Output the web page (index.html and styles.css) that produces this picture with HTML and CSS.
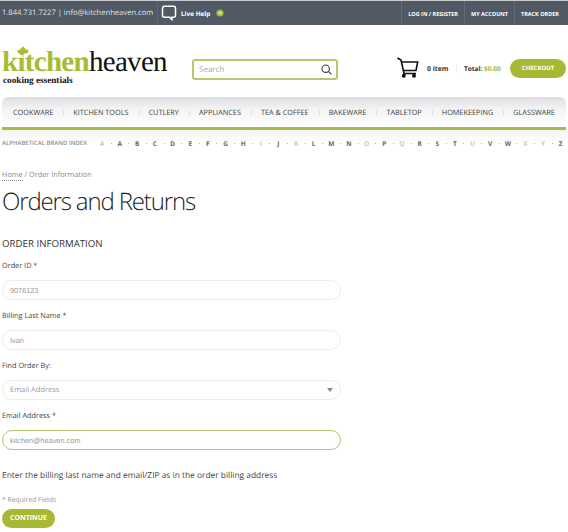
FILE: index.html
```html
<!DOCTYPE html>
<html lang="en">
<head>
<meta charset="utf-8">
<title>Orders and Returns</title>
<link rel="stylesheet" href="styles.css">
</head>
<body>
<div class="topbar">
  <div class="top-left">
    <span class="contact">1.844.731.7227 | info@kitchenheaven.com</span>
    <span class="help">
      <svg class="bubble" width="16" height="16" viewBox="0 0 16 16"><path d="M3.5 1.2h9a2 2 0 0 1 2 2v7a2 2 0 0 1-2 2h-1.6v2.3l-2.4-2.3H3.5a2 2 0 0 1-2-2v-7a2 2 0 0 1 2-2z" fill="none" stroke="#fff" stroke-width="1.5"/></svg>
      <b>Live Help</b>
      <svg class="go" width="8" height="8" viewBox="0 0 8 8"><circle cx="4" cy="4" r="3.6" fill="#a9bb34"/><path d="M2 4h3.6M4.2 2.6 5.6 4 4.2 5.4" stroke="#fff" stroke-width=".8" fill="none"/></svg>
    </span>
  </div>
  <div class="top-links"><a>LOG IN / REGISTER</a><a>MY ACCOUNT</a><a>TRACK ORDER</a></div>
</div>

<header class="header">
  <div class="logo">
    <svg class="leaf" width="12" height="11" viewBox="0 0 12 11"><path d="M6 0l1.3 2.2 1.2-.5-.4 2.4 1.5-1 .5 1L12 4.400 10.800 6.300 11.300 7 8 7.600 6.400 8.200V11H5.600V8.200L4 7.600.7 7l.5-.7L0 4.400l1.900-.3.500-1 1.500 1-.4-2.400 1.200.5z" fill="#a9bb34"/></svg>
    <div class="wordmark"><span class="kitchen">kitchen</span><span class="heaven">heaven</span></div>
    <div class="tagline">cooking essentials</div>
  </div>
  <div class="search">
    <span>Search</span>
    <svg width="11" height="11" viewBox="0 0 11 11"><circle cx="4.700" cy="4.700" r="3.700" fill="none" stroke="#3a3a3a" stroke-width="1.100"/><path d="M7.400 7.400 10.400 10.400" stroke="#3a3a3a" stroke-width="1.200"/></svg>
  </div>
  <div class="cart">
    <svg class="cart-icon" width="22" height="22" viewBox="0 0 22 22"><path d="M.5 1 4 3l3 13.500h12M4.800 5h15.900l-1.700 8.500H6.700" fill="none" stroke="#111" stroke-width="1.600"/><circle cx="6.800" cy="18.800" r="2" fill="#111"/><circle cx="17" cy="18.800" r="2" fill="#111"/></svg>
    <b class="items">0 item</b>
    <span class="total">Total: <em>$0.00</em></span>
    <a class="checkout">CHECKOUT</a>
  </div>
</header>

<nav class="nav">
  <a>COOKWARE</a><a>KITCHEN TOOLS</a><a>CUTLERY</a><a>APPLIANCES</a><a>TEA &amp; COFFEE</a><a>BAKEWARE</a><a>TABLETOP</a><a>HOMEKEEPING</a><a>GLASSWARE</a>
</nav>

<div class="brands">
  <span class="brands-title">ALPHABETICAL BRAND INDEX</span>
  <ol class="letters">
    <li class="off">#</li><li>A</li><li>B</li><li>C</li><li>D</li><li>E</li><li>F</li><li>G</li><li>H</li><li class="off">I</li><li>J</li><li class="off">K</li><li>L</li><li>M</li><li>N</li><li class="off">O</li><li>P</li><li class="off">Q</li><li>R</li><li>S</li><li>T</li><li class="off">U</li><li>V</li><li>W</li><li class="off">X</li><li class="off">Y</li><li>Z</li>
  </ol>
</div>

<main class="main">
  <div class="crumbs"><a>Home</a> / Order Information</div>
  <h1>Orders and Returns</h1>
  <h2>ORDER INFORMATION</h2>
  <form class="form">
    <label>Order ID *</label>
    <div class="field"><span class="num">9076123</span></div>
    <label>Billing Last Name *</label>
    <div class="field"><span class="num">Ivan</span></div>
    <label>Find Order By:</label>
    <div class="field select"><span>Email Address</span><i class="arrow"></i></div>
    <label>Email Address *</label>
    <div class="field active"><span class="num">kitchen@heaven.com</span></div>
  </form>
  <p class="note">Enter the billing last name and email/ZIP as in the order billing address</p>
  <p class="req">* Required Fields</p>
  <a class="continue">CONTINUE</a>
</main>
</body>
</html>
```

FILE: styles.css
```css
* { box-sizing: border-box; }
html, body { margin: 0; padding: 0; }
body {
  width: 568px;
  height: 532px;
  overflow: hidden;
  background: #fff;
  font-family: "Open Sans", sans-serif;
  color: #333;
  text-rendering: geometricPrecision;
}
.topbar {
  height: 25px;
  border-top: 1px solid #c9cbcd;
  background: #515a64;
  display: flex;
  justify-content: space-between;
  color: #fff;
}
.top-left { display: flex; align-items: center; padding-left: 2px; }
.contact { font-size: 7.600px; color: #dfe2e5; width: 155px; white-space: nowrap; }
.help {
  display: flex;
  align-items: center;
  height: 24px;
  padding-left: 3px;
  border-left: 1px solid #5e6770;
  font-size: 6.400px;
}
.bubble { margin-right: 4px; }
.go { margin-left: 6px; }
.top-links { display: flex; padding-right: 3px; }
.top-links a {
  display: flex;
  align-items: center;
  padding: 2px 6px 0 6px;
  border-left: 1px solid #636c75;
  font-size: 5.500px;
  font-weight: 700;
  white-space: nowrap;
}
.header {
  height: 72px;
  position: relative;
  display: flex;
  align-items: flex-start;
  padding-left: 2px;
}
.logo { width: 190px; height: 60px; padding-top: 21px; position: relative; }
.leaf { position: absolute; left: 15px; top: 21px; }
.wordmark { font-family: "Liberation Serif", serif; font-size: 29px; line-height: 28px; margin-top: 2px; letter-spacing: -.7px; white-space: nowrap; }
.kitchen { color: #a9bb34; font-weight: 700; }
.heaven { color: #111; }
.tagline { font-family: "Liberation Serif", serif; font-weight: 700; font-size: 9.200px; line-height: 9px; color: #111; margin-top: 0; padding-left: 1px; }
.search {
  width: 146px;
  height: 21px;
  margin-top: 34px;
  border: 2px solid #b9c76e;
  border-radius: 3px;
  display: flex;
  align-items: center;
  justify-content: space-between;
  padding: 0 4px 0 5px;
  font-size: 8px;
  color: #a4a8ac;
}
.cart { margin-left: 59px; margin-top: 31px; display: flex; align-items: center; height: 24px; }
.cart-icon { margin-right: 8px; }
.items { font-size: 6.800px; width: 29px; color: #333; }
.total { font-size: 6.500px; font-weight: 700; padding-left: 7px; border-left: 1px solid #eee; width: 54px; color: #333; }
.total em { font-style: normal; color: #a9bb34; }
.checkout {
  width: 56px;
  height: 19px;
  border-radius: 10px;
  background: #a9b833;
  color: #fff;
  font-size: 6px;
  font-weight: 700;
  display: flex;
  align-items: center;
  justify-content: center;
}
.nav {
  margin: 0 2px;
  height: 33px;
  border-bottom: 3px solid #a9bb44;
  border-radius: 6px 6px 0 0;
  background: linear-gradient(#dcdddf, #f4f4f5 40%, #fff);
  display: flex;
  align-items: center;
  padding: 0 11px 0 11px;
  justify-content: space-between;
}
.nav a { position: relative; font-size: 7.300px; color: #3c3c3c; padding: 2px 0 0 0; white-space: nowrap; flex: 0 0 auto; }
.nav a + a::before {
  content: "";
  position: absolute;
  left: -10px;
  top: 4px;
  width: 1px;
  height: 6px;
  background: #e2e2e2;
}
.brands {
  display: flex;
  align-items: center;
  justify-content: space-between;
  height: 24px;
  padding: 2px 4px 0 2px;
  background: linear-gradient(#f2f2f2, #fff 50%);
}
.brands-title { font-size: 6px; font-weight: 600; color: #8a8e92; white-space: nowrap; }
.letters { list-style: none; display: flex; justify-content: space-between; width: 465px; margin: 0; padding: 0; font-size: 6.500px; font-weight: 700; color: #666; }
.letters li { position: relative; width: 6px; text-align: center; }
.letters li + li::before {
  content: "";
  position: absolute;
  left: -6px;
  top: 4px;
  width: 1px;
  height: 1px;
  background: #b5b5b5;
}
.letters .off { color: #c8c8c8; }
.main { padding: 0 2px; }
.crumbs { margin-top: 15px; font-size: 7.300px; line-height: 12px; color: #8a8a8a; }
.crumbs a { border-bottom: 1px dotted #8a8a8a; }
h1 { margin: 4px 0 0; font-size: 24px; line-height: 34px; font-weight: 300; color: #222; letter-spacing: -1.150px; }
h2 { margin: 18px 0 0; font-size: 9.700px; line-height: 14px; font-weight: 400; color: #333; }
.form { display: flex; flex-direction: column; width: 339px; }
.form label { display: block; font-size: 7.300px; line-height: 12px; margin-top: 10px; color: #444; }
.form label:first-child { margin-top: 9px; }
.field {
  margin-top: 8px;
  height: 20px;
  border: 1px solid #eeeeee;
  border-radius: 10px;
  display: flex;
  align-items: center;
  justify-content: space-between;
  padding: 0 8px 0 7px;
  font-size: 7.500px;
  color: #999;
}
.field .num { font-family: "Liberation Sans", sans-serif; font-size: 7.300px; }
.field.active { border-color: #b3c268; }
.select { padding-right: 7px; }
.arrow { width: 0; height: 0; border: 3.500px solid transparent; border-top: 4px solid #8a8a8a; border-bottom: 0; }
.note { margin: 19px 0 0; font-size: 8.400px; line-height: 13px; color: #444; }
.req { margin: 13px 0 0; font-size: 6.800px; line-height: 10px; color: #999; }
.continue {
  display: flex;
  align-items: center;
  justify-content: center;
  margin-top: 4px;
  width: 53px;
  height: 19px;
  border-radius: 10px;
  background: #a9b833;
  color: #fff;
  font-size: 7px;
  font-weight: 700;
}
```
